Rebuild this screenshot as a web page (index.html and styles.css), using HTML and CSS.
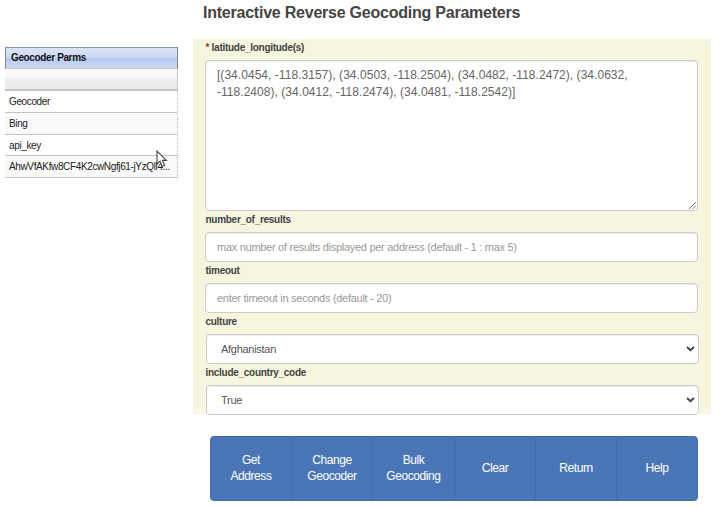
FILE: index.html
```
<!DOCTYPE html>
<html lang="en">
<head>
<meta charset="utf-8">
<title>Interactive Reverse Geocoding Parameters</title>
<link rel="stylesheet" href="styles.css">
</head>
<body>
<div class="page">
  <aside class="parms">
    <h2 class="parms-title">Geocoder Parms</h2>
    <div class="parms-head"></div>
    <ul class="parms-rows">
      <li>Geocoder</li>
      <li>Bing</li>
      <li>api_key</li>
      <li>AhwVfAKfw8CF4K2cwNgfj61-jYzQll4...</li>
    </ul>
    <svg class="cursor" width="12" height="18" viewBox="0 0 12 18"><path d="M1 1V14L4 11.2L6.3 16.4L8.7 15.3L6.4 10.4H10.4Z" fill="#fff" stroke="#444450" stroke-width="1.1"/></svg>
  </aside>
  <main class="main">
    <h1>Interactive Reverse Geocoding Parameters</h1>
    <form class="form">
      <label><span class="star">*</span> latitude_longitude(s)</label>
      <div class="box area">[(34.0454, -118.3157), (34.0503, -118.2504), (34.0482, -118.2472), (34.0632,<br>-118.2408), (34.0412, -118.2474), (34.0481, -118.2542)]
        <svg class="grip" width="9" height="9" viewBox="0 0 9 9"><path d="M1 8L8 1M4.5 8L8 4.5" stroke="#777" fill="none"/></svg>
      </div>
      <label>number_of_results</label>
      <div class="box hint">max number of results displayed per address (default - 1 : max 5)</div>
      <label>timeout</label>
      <div class="box hint">enter timeout in seconds (default - 20)</div>
      <label>culture</label>
      <div class="box pick"><span>Afghanistan</span><svg width="9" height="6" viewBox="0 0 9 6"><path d="M1 1L4.5 4.3L8 1" stroke="#444" stroke-width="1.9" fill="none"/></svg></div>
      <label>include_country_code</label>
      <div class="box pick"><span>True</span><svg width="9" height="6" viewBox="0 0 9 6"><path d="M1 1L4.5 4.3L8 1" stroke="#444" stroke-width="1.9" fill="none"/></svg></div>
    </form>
    <nav class="buttons">
      <button>Get<br>Address</button>
      <button>Change<br>Geocoder</button>
      <button>Bulk<br>Geocoding</button>
      <button>Clear</button>
      <button>Return</button>
      <button>Help</button>
    </nav>
  </main>
</div>
</body>
</html>
```
FILE: styles.css
```
* { box-sizing: border-box; }
body {
  margin: 0;
  width: 720px;
  height: 508px;
  overflow: hidden;
  background: #fff;
  color: #444;
  font-family: "Liberation Sans", Arial, sans-serif;
}
.page { display: flex; padding-left: 5px; }
.parms {
  position: relative;
  width: 173px;
  margin-top: 47px;
  color: #222;
  font-size: 10px;
  letter-spacing: -.37px;
}
.parms-title {
  height: 22px;
  margin: 0;
  padding-left: 5px;
  border: 1px solid #7d828c;
  border-top-color: #7f93b8;
  border-bottom-color: #c5cad3;
  background: linear-gradient(#dce5f6 0, #cad8f1 50%, #b6c9ec 51%, #cbd9f4 100%);
  font-size: 10px;
  line-height: 20px;
  color: #111;
}
.parms-head {
  height: 22px;
  border-right: 1px solid #c8c8c8;
  border-bottom: 2px solid #c6c7c9;
  background: linear-gradient(#f9f9fa 0, #f7f7f8 45%, #eceef0 46%, #e7e9eb 100%);
}
.parms-rows {
  margin: 0;
  padding: 0;
  list-style: none;
  border-right: 1px dotted #b8b8b8;
}
.parms-rows li {
  height: 21.75px;
  padding-left: 4px;
  border-bottom: 1px solid #c4c4c4;
  line-height: 22px;
  white-space: nowrap;
}
.parms-rows li:nth-child(even) { background: #f9f9f9; }
.cursor { position: absolute; left: 151px; top: 103px; }
.main { width: 518px; margin-left: 15px; }
h1 {
  height: 39px;
  margin: 0;
  padding-left: 10px;
  font-size: 16px;
  line-height: 26px;
  letter-spacing: -.23px;
  white-space: nowrap;
}
.form {
  height: 375px;
  padding: 0 13px 0 12px;
  background: #f6f5e0;
}
label {
  display: block;
  height: 21px;
  padding-left: .5px;
  font-size: 10px;
  font-weight: bold;
  line-height: 17px;
  letter-spacing: -.28px;
  white-space: nowrap;
}
.star { color: #7a4a3c; }
.box {
  height: 30px;
  padding: 0 11px;
  border: 1px solid #ccc;
  border-radius: 4px;
  background: #fff;
  box-shadow: inset 0 1px 1px rgba(0, 0, 0, .075);
  color: #666;
  font-size: 11px;
  line-height: 28px;
  letter-spacing: -.28px;
  white-space: nowrap;
}
.area {
  position: relative;
  height: 151px;
  padding-top: 6px;
  font-size: 12px;
  line-height: 17.3px;
  letter-spacing: .04px;
}
.grip { position: absolute; right: 0; bottom: 0; }
.hint { color: #999; }
.pick {
  display: flex;
  align-items: center;
  justify-content: space-between;
  margin: 0 -1px 0 1px;
  padding: 0 3px 0 14px;
  color: #555;
}
.buttons {
  display: grid;
  grid-template-columns: 81px 81px 82px 81px 81px 1fr;
  width: 488px;
  height: 65px;
  margin: 22px 0 0 17px;
  overflow: hidden;
  border: 1px solid #426ca8;
  border-radius: 4px;
  background: #4a76b8;
}
button {
  padding: 0 0 2px;
  border: 0;
  border-right: 1px solid #426ca8;
  background: none;
  color: #fff;
  font: 12px/16px "Liberation Sans", Arial, sans-serif;
  letter-spacing: -.42px;
}
button:last-child { border-right: 0; }
```
